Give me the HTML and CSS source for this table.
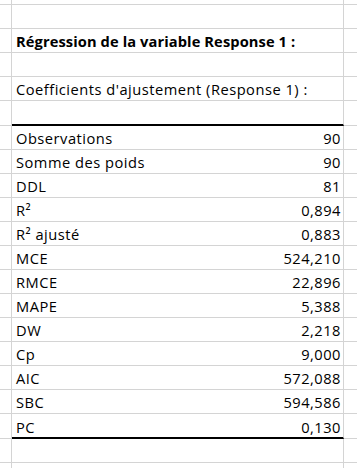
FILE: index.html
```html
<!DOCTYPE html>
<html lang="fr">
<head>
<meta charset="utf-8">
<title>Régression</title>
<link rel="stylesheet" href="styles.css">
</head>
<body>
<div class="sheet">
  <div class="c a r0"></div><div class="c b r0"></div><div class="c e r0"></div>
  <div class="c a"></div><div class="c b"></div><div class="c e"></div>
  <div class="c a"></div><div class="c b title">Régression de la variable Response 1 :</div><div class="c e"></div>
  <div class="c a"></div><div class="c b"></div><div class="c e"></div>
  <div class="c a"></div><div class="c b">Coefficients d'ajustement (Response 1) :</div><div class="c e"></div>
  <div class="c a"></div><div class="c b thick"></div><div class="c e"></div>
  <div class="c a"></div><div class="c b kv"><span>Observations</span><span>90</span></div><div class="c e"></div>
  <div class="c a"></div><div class="c b kv"><span>Somme des poids</span><span>90</span></div><div class="c e"></div>
  <div class="c a"></div><div class="c b kv"><span>DDL</span><span>81</span></div><div class="c e"></div>
  <div class="c a"></div><div class="c b kv"><span>R²</span><span>0,894</span></div><div class="c e"></div>
  <div class="c a"></div><div class="c b kv"><span>R² ajusté</span><span>0,883</span></div><div class="c e"></div>
  <div class="c a"></div><div class="c b kv"><span>MCE</span><span>524,210</span></div><div class="c e"></div>
  <div class="c a"></div><div class="c b kv"><span>RMCE</span><span>22,896</span></div><div class="c e"></div>
  <div class="c a"></div><div class="c b kv"><span>MAPE</span><span>5,388</span></div><div class="c e"></div>
  <div class="c a"></div><div class="c b kv"><span>DW</span><span>2,218</span></div><div class="c e"></div>
  <div class="c a"></div><div class="c b kv"><span>Cp</span><span>9,000</span></div><div class="c e"></div>
  <div class="c a"></div><div class="c b kv"><span>AIC</span><span>572,088</span></div><div class="c e"></div>
  <div class="c a"></div><div class="c b kv"><span>SBC</span><span>594,586</span></div><div class="c e"></div>
  <div class="c a"></div><div class="c b kv thick"><span>PC</span><span>0,130</span></div><div class="c e"></div>
  <div class="c a"></div><div class="c b"></div><div class="c e"></div>
  <div class="c a"></div><div class="c b"></div><div class="c e"></div>
</div>
</body>
</html>
```

FILE: styles.css
```css
html, body {
  margin: 0;
  padding: 0;
  background: #ffffff;
}
body {
  width: 357px;
  height: 468px;
  overflow: hidden;
  font-family: "Open Sans", Lato, sans-serif;
  font-size: 14.67px;
  color: #000000;
}
.sheet {
  display: grid;
  grid-template-columns: 12px 332px 13px;
  grid-template-rows: 5px 24px 24px 24px 24px 25px repeat(12, 24px) 25px 24px 24px;
}
.c {
  box-sizing: border-box;
  border-bottom: 1px solid #d4d4d4;
  border-right: 1px solid #d4d4d4;
  display: flex;
  align-items: flex-end;
  padding: 0 2px 2px 4px;
  line-height: 18px;
  letter-spacing: 0.5px;
  white-space: nowrap;
  overflow: hidden;
}
.a { padding: 0; }
.e { border-right: none; padding: 0; }
.title {
  font-weight: bold;
  letter-spacing: 0.1px;
}
.kv { justify-content: space-between; }
.thick {
  border-bottom: 2px solid #000000;
  padding-bottom: 1px;
}
```
